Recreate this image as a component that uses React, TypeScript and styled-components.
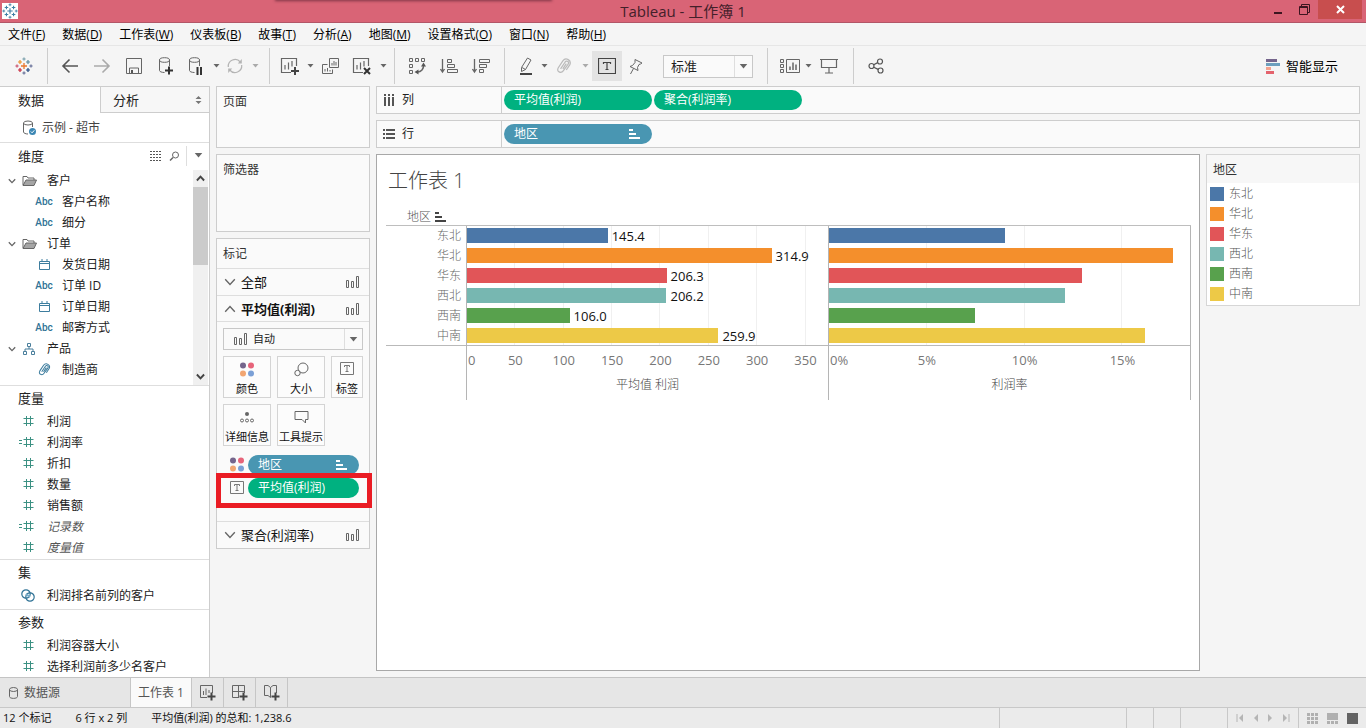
import React from "react";
import styled, { createGlobalStyle, css } from "styled-components";

const GlobalStyle = createGlobalStyle`
  * { box-sizing: border-box; }
  body {
    margin: 0;
    background: #f5f5f5;
    color: #222;
    font: 12px/16px "Open Sans", "Noto Sans CJK SC", sans-serif;
  }
  button, select { font: inherit; color: inherit; }
  button { border: 0; padding: 0; background: none; white-space: nowrap; }
  svg { display: block; flex: none; }
`;

const line = "#cdcdcd";
const softLine = "#dedede";
const green = "#00b180";
const blue = "#4996b2";

const Window = styled.div`
  display: flex;
  flex-direction: column;
  min-height: 100vh;
`;

/* ---------- title bar ---------- */
const TitleBar = styled.header`
  position: relative;
  display: grid;
  grid-template-columns: 1fr auto 1fr;
  height: 23px;
  background: #d96476;
  border-bottom: 1px solid #b25667;
`;
const TopShadow = styled.div`
  position: absolute;
  top: -3px;
  left: 275px;
  width: 277px;
  height: 3px;
  box-shadow: 0 1px 3px #7c3444;
`;
const AppBadge = styled.span`
  align-self: start;
  margin: 3px 2px;
  width: 16px;
  height: 16px;
  background: #fff;
`;
const AppTitle = styled.h1`
  margin: 0;
  font-size: 15px;
  line-height: 23px;
  font-weight: 400;
  color: #43202a;
`;
const WindowButtons = styled.div`
  display: flex;
  justify-content: flex-end;
  padding-right: 4px;
`;
const WindowButton = styled.button<{ $close?: boolean }>`
  display: grid;
  place-items: center;
  width: ${(p) => (p.$close ? 44 : 27)}px;
  height: 19px;
  background: ${(p) => (p.$close ? "#c84e4e" : "transparent")};
`;

/* ---------- menu and toolbar ---------- */
const MenuBar = styled.nav`
  display: flex;
  align-items: center;
  gap: 17px;
  height: 23px;
  padding: 2px 0 0 8px;
  border-bottom: 1px solid #e6e6e6;
  color: #000;
`;
const Toolbar = styled.div`
  display: flex;
  align-items: center;
  height: 40px;
  padding-right: 28px;
`;
const ToolGroup = styled.div<{ $pad: number; $end?: number; $open?: boolean }>`
  display: flex;
  align-items: center;
  height: 36px;
  padding-left: ${(p) => p.$pad}px;
  padding-right: ${(p) => p.$end ?? 0}px;
  ${(p) => !p.$open && css`border-right: 1px solid ${line};`}
`;
const ToolButton = styled.button<{ $w?: number; $active?: boolean }>`
  display: grid;
  place-items: center;
  width: ${(p) => p.$w ?? 32}px;
  height: 30px;
  background: ${(p) => (p.$active ? "#e3e3e3" : "transparent")};
`;
const SmartShow = styled.button`
  display: flex;
  align-items: center;
  gap: 6px;
  margin-left: auto;
  font-size: 13px;
  color: #000;
`;
const SelectBox = styled.div<{ $fit?: boolean }>`
  position: relative;
  display: flex;
  align-items: center;
  height: ${(p) => (p.$fit ? 23 : 22)}px;
  width: ${(p) => (p.$fit ? "90px" : "100%")};
  margin: ${(p) => (p.$fit ? "0 14px 0 13px" : "0")};
  border: 1px solid #c8c8c8;
  background: #fafafa;
`;
const Select = styled.select<{ $inset: number; $size: number }>`
  appearance: none;
  flex: 1;
  height: 100%;
  border: 0;
  background: none;
  padding: 0 20px 0 ${(p) => p.$inset}px;
  font-size: ${(p) => p.$size}px;
`;
const SelectArrow = styled.span`
  position: absolute;
  right: 0;
  top: 0;
  bottom: 0;
  width: 18px;
  display: grid;
  place-items: center;
  border-left: 1px solid #dedede;
  pointer-events: none;
`;
const SelectIcon = styled.span`
  position: absolute;
  left: 9px;
  top: 4px;
  pointer-events: none;
`;

/* ---------- data panel ---------- */
const Main = styled.main`
  display: flex;
  flex: 1;
`;
const DataPanel = styled.aside`
  flex: 0 0 210px;
  background: #fff;
  border-right: 1px solid ${line};
  border-top: 1px solid ${line};
`;
const PanelTabs = styled.div`
  display: flex;
  height: 26px;
`;
const PanelTab = styled.button<{ $inactive?: boolean }>`
  display: flex;
  align-items: center;
  justify-content: space-between;
  font-size: 13px;
  padding: 0 7px 0 18px;
  width: 100px;
  ${(p) =>
    p.$inactive &&
    css`
      flex: 1;
      padding-left: 12px;
      background: #f7f7f7;
      border-left: 1px solid ${line};
      border-bottom: 1px solid ${line};
    `}
`;
const DataSource = styled.div`
  display: flex;
  align-items: center;
  gap: 5px;
  height: 30px;
  padding-left: 22px;
  color: #444;
  border-bottom: 1px solid ${softLine};
`;
const Section = styled.section<{ $end?: number }>`
  padding-bottom: ${(p) => p.$end ?? 0}px;
  & + & { border-top: 1px solid ${softLine}; }
`;
const SectionHead = styled.div<{ $tall?: boolean }>`
  display: flex;
  align-items: center;
  height: ${(p) => (p.$tall ? 27 : 25)}px;
  padding: 0 0 2px 18px;
`;
const SectionTitle = styled.h2`
  flex: 1;
  margin: 0;
  font-size: 13px;
  font-weight: 400;
`;
const HeadButton = styled.button<{ $divided?: boolean }>`
  display: grid;
  place-items: center;
  width: ${(p) => (p.$divided ? 23 : 19)}px;
  height: 20px;
  ${(p) => p.$divided && css`border-left: 1px solid ${softLine}; margin-left: 2px;`}
`;
const TreeArea = styled.div`
  display: flex;
  height: 215px;
`;
const Fields = styled.ul`
  flex: 1;
  margin: 0;
  padding: 0;
  list-style: none;
`;
const Field = styled.li<{ $kind: "folder" | "child" | "flat"; $italic?: boolean }>`
  display: flex;
  align-items: center;
  height: 21px;
  padding-left: ${(p) => ({ folder: 4, child: 33, flat: 18 }[p.$kind])}px;
  ${(p) => p.$italic && css`font-style: italic; color: #555;`}
`;
const FieldIcon = styled.span<{ $w: number }>`
  display: grid;
  place-items: center;
  width: ${(p) => p.$w}px;
`;
const FieldName = styled.span<{ $gap: number }>`
  padding-left: ${(p) => p.$gap}px;
`;
const AbcTag = styled.span`
  font: 500 10px/16px Roboto, sans-serif;
  color: #2f7295;
`;
const ScrollTrack = styled.div`
  display: flex;
  flex-direction: column;
  width: 15px;
  margin-right: 1px;
  background: #f0f0f0;
`;
const ScrollEnd = styled.button`
  display: grid;
  place-items: center;
  height: 17px;
`;
const ScrollThumb = styled.div`
  height: 78px;
  margin-bottom: auto;
  background: #cbcbcb;
`;

/* ---------- workspace ---------- */
const Workspace = styled.div`
  display: flex;
  flex: 1;
  gap: 6px;
  padding: 0 6px 6px;
  min-width: 0;
`;
const CardColumn = styled.div`
  display: flex;
  flex-direction: column;
  gap: 6px;
  width: 154px;
`;
const Card = styled.section<{ $h?: number }>`
  min-height: ${(p) => p.$h ?? 0}px;
  background: #fafafa;
  border: 1px solid ${line};
`;
const CardTitle = styled.h2`
  margin: 0;
  padding: 7px 6px 5px;
  font-size: 12px;
  font-weight: 400;
  color: #333;
`;
const MarksTitle = styled(CardTitle)`
  height: 30px;
  border-bottom: 1px solid ${softLine};
`;
const MarkLayer = styled.button<{ $bold?: boolean; $last?: boolean }>`
  display: flex;
  align-items: center;
  gap: 5px;
  width: 100%;
  height: ${(p) => (p.$bold ? 26 : 27)}px;
  padding: 0 10px 0 7px;
  font-size: 13px;
  font-weight: ${(p) => (p.$bold ? 700 : 400)};
  color: #111;
  ${(p) => (p.$last ? css`border-top: 1px solid ${softLine};` : css`border-bottom: 1px solid ${softLine};`)}
  & > svg:last-child { margin-left: auto; }
`;
const MarksBody = styled.div`
  padding: 6px 6px 7px;
`;
const MarkButtons = styled.div`
  display: grid;
  grid-template-columns: 48px 48px 32px;
  gap: 6px;
  margin-top: 6px;
`;
const MarkButton = styled.button`
  display: flex;
  flex-direction: column;
  align-items: center;
  justify-content: space-between;
  height: 42px;
  padding: 5px 0 0;
  border: 1px solid #d4d4d4;
  background: #fcfcfc;
  font-size: 11px;
  color: #111;
`;
const MarkPillRow = styled.div`
  position: relative;
  display: flex;
  align-items: center;
  gap: 3px;
  height: 23px;
  padding: 0 10px 0 12px;
`;
const MarkPillList = styled.div`
  padding-bottom: 22px;
`;
const HighlightBox = styled.div`
  position: absolute;
  inset: -3px -3px -9px -1px;
  border: 5px solid #ea1c24;
`;
const PillBox = styled.button<{ $tone: string; $fluid?: boolean }>`
  display: flex;
  align-items: center;
  justify-content: space-between;
  width: 148px;
  height: 20px;
  padding: 0 12px 0 10px;
  border-radius: 10px;
  background: ${(p) => p.$tone};
  color: #fff;
  ${(p) => p.$fluid && css`flex: 1; width: auto;`}
`;

const SheetArea = styled.div`
  display: flex;
  flex: 1;
  flex-direction: column;
  gap: 6px;
  min-width: 0;
`;
const Shelf = styled.div`
  display: flex;
  align-items: center;
  gap: 2px;
  height: 28px;
  border: 1px solid ${line};
  background: #fafafa;
`;
const ShelfLabel = styled.div`
  display: flex;
  align-items: center;
  gap: 7px;
  width: 125px;
  height: 100%;
  padding-left: 6px;
  border-right: 1px solid ${line};
`;
const SheetRow = styled.div`
  display: flex;
  flex: 1;
  gap: 6px;
  align-items: flex-start;
`;
const View = styled.section`
  flex: 1;
  align-self: stretch;
  padding: 0 8px 0 9px;
  background: #fff;
  border: 1px solid #a8a8a8;
`;
const SheetTitle = styled.h2`
  margin: 0;
  padding: 1px 0 0 2px;
  font-size: 20px;
  line-height: 50px;
  font-weight: 300;
  color: #444;
`;
const RowHeader = styled.div`
  display: flex;
  align-items: center;
  gap: 4px;
  height: 19px;
  padding: 2px 0 0 21px;
  font-weight: 300;
  color: #555;
`;
const Chart = styled.div`
  display: grid;
  grid-template-columns: 80px 362fr 363fr;
  align-items: start;
  border-top: 1px solid #bebebe;
`;
const CategoryColumn = styled.div`
  border-bottom: 1px solid #b9b9b9;
  & > :last-child { height: 19px; }
`;
const Category = styled.div`
  height: 20px;
  padding-right: 5px;
  line-height: 20px;
  text-align: right;
  font-weight: 300;
  color: #666;
`;
const Pane = styled.div`
  min-width: 0;
  border-left: 1px solid #b5b5b5;
  &:last-child { border-right: 1px solid #b5b5b5; }
`;
const Bars = styled.div<{ $step: number }>`
  border-bottom: 1px solid #b9b9b9;
  background: repeating-linear-gradient(
    to right,
    transparent 0,
    transparent calc(${(p) => p.$step}% - 1px),
    #f0f0f0 calc(${(p) => p.$step}% - 1px),
    #f0f0f0 ${(p) => p.$step}%
  );
  & > :last-child { height: 19px; padding-bottom: 0; }
`;
const BarRow = styled.div`
  display: flex;
  align-items: center;
  gap: 4px;
  height: 20px;
  padding-bottom: 1px;
  font-size: 13px;
  color: #111;
`;
const Bar = styled.div`
  height: 15px;
`;
const Ticks = styled.div`
  display: flex;
  margin-top: 6px;
  font-size: 13px;
  color: #777;
  overflow: hidden;
`;
const Tick = styled.span<{ $w: number; $first?: boolean }>`
  flex: none;
  width: ${(p) => p.$w}%;
  text-align: ${(p) => (p.$first ? "left" : "center")};
  padding-left: ${(p) => (p.$first ? 1 : 0)}px;
`;
const AxisTitle = styled.div`
  padding: 9px 0 7px;
  text-align: center;
  font-weight: 300;
  color: #444;
`;
const Legend = styled.section`
  width: 154px;
  background: #fff;
  border: 1px solid #d6d6d6;
`;
const LegendTitle = styled(CardTitle)`
  background: #f7f7f7;
`;
const LegendItem = styled.div`
  display: flex;
  align-items: center;
  gap: 5px;
  height: 20px;
  padding-left: 3px;
  font-weight: 300;
  color: #555;
`;
const Swatch = styled.span<{ $tone: string }>`
  width: 14px;
  height: 14px;
  background: ${(p) => p.$tone};
`;
const LegendList = styled.div`
  padding: 1px 0;
`;

/* ---------- bottom strips ---------- */
const TabStrip = styled.nav`
  display: flex;
  height: 31px;
  background: #e6e6e6;
  border-top: 1px solid #c4c4c4;
  border-bottom: 1px solid #c8c8c8;
`;
const SheetTab = styled.button<{ $w: number; $active?: boolean }>`
  display: flex;
  align-items: center;
  justify-content: ${(p) => (p.$w > 100 ? "flex-start" : "center")};
  gap: 6px;
  width: ${(p) => p.$w}px;
  padding: ${(p) => (p.$w > 100 ? "0 9px" : "0")};
  color: #555;
  background: ${(p) => (p.$active ? "#fafafa" : "transparent")};
  border-right: 1px solid #c6c6c6;
`;
const StatusBar = styled.footer`
  display: flex;
  align-items: center;
  gap: 24px;
  height: 20px;
  padding-left: 3px;
  background: #ebebeb;
  font-size: 11px;
  color: #111;
`;
const StatusCells = styled.div`
  display: flex;
  height: 100%;
  margin-left: auto;
`;
const StatusCell = styled.div<{ $w: number }>`
  display: flex;
  align-items: center;
  justify-content: space-around;
  width: ${(p) => p.$w}px;
  padding: 0 3px;
  border-left: 1px solid #c8c8c8;
`;

/* ---------- icons ---------- */
type IconProps = { w: number; h?: number; c?: string; sw?: number; children: React.ReactNode };
const Icon = ({ w, h = w, c = "#666", sw = 1, children }: IconProps) => (
  <svg width={w} height={h} viewBox={`0 0 ${w} ${h}`} fill="none" stroke={c} strokeWidth={sw} aria-hidden="true">
    {children}
  </svg>
);

const plus = (x: number, y: number, r: number) => `M${x - r} ${y}h${2 * r}M${x} ${y - r}v${2 * r}`;

const Logo = ({ mono }: { mono?: boolean }) => {
  const k = (c: string) => (mono ? "#3f7fa5" : c);
  return (
    <Icon w={18} h={18}>
      <path d={plus(9, 9, 3)} stroke={k("#e8762c")} strokeWidth="1.3" />
      <path d={plus(5, 5, 2)} stroke={k("#eb9129")} strokeWidth="1.2" />
      <path d={plus(13, 5, 2)} stroke={k("#59879b")} strokeWidth="1.2" />
      <path d={plus(5, 13, 2)} stroke={k("#c72035")} strokeWidth="1.2" />
      <path d={plus(13, 13, 2)} stroke={k("#1f447e")} strokeWidth="1.2" />
      <path d={plus(9, 2, 1.6)} stroke={k("#7199a6")} />
      <path d={plus(9, 16, 1.6)} stroke={k("#5b6591")} />
      <path d={plus(2, 9, 1.6)} stroke={k("#c84664")} />
      <path d={plus(16, 9, 1.6)} stroke={k("#5b6591")} />
    </Icon>
  );
};
const Caret = ({ faint, wide }: { faint?: boolean; wide?: boolean }) => (
  <svg width={wide ? 9 : 7} height={wide ? 5 : 4} viewBox="0 0 7 4" aria-hidden="true">
    <path d="M.5 0h6L3.500 3.600z" fill={faint ? "#aaa" : "#666"} />
  </svg>
);
const Arrow = ({ back }: { back?: boolean }) => (
  <Icon w={18} h={16} c={back ? "#555" : "#aaa"} sw={1.6}>
    <path d={back ? "M17 8H2M8.500 1.500L2 8l6.500 6.500" : "M1 8h15M9.500 1.500L16 8l-6.500 6.500"} />
  </Icon>
);
const SaveIcon = () => (
  <Icon w={16}><path d="M.5.500h15v15H.5zM3.500 15v-5h9v5" /><path d="M5 12h2v3H5z" fill="#555" stroke="none" /></Icon>
);
const DbIcon = ({ pause }: { pause?: boolean }) => (
  <Icon w={18} h={20}>
    <ellipse cx="7.500" cy="4" rx="5" ry="2.300" />
    <path d="M2.500 4v10.500c0 1 2 2 5 2M12.500 4v6" />
    {pause ? <path d="M10.500 11v8M14 11v8" stroke="#333" strokeWidth="2" /> : <path d={plus(12, 14.500, 4)} stroke="#333" strokeWidth="2" />}
  </Icon>
);
const RefreshIcon = () => (
  <Icon w={18} c="#b4b4b4" sw={1.2}>
    <path d="M2.300 10a6.800 6.800 0 0 1 12-5M15.700 8a6.800 6.800 0 0 1-12 5" />
    <path d="M15.800 2v4.500h-4zM2.200 16v-4.500h4z" fill="#b4b4b4" stroke="none" />
  </Icon>
);
const SheetIcon = ({ clear, small }: { clear?: boolean; small?: boolean }) => (
  <Icon w={small ? 17 : 20} h={small ? 17 : 20}>
    <path d={small ? "M8 13.500H1.500v-12h12V9M4.500 11V7M7 11V4.500M10 9V6" : "M11 16.500H1.500v-14h15V10M5 13.500V9M8.500 13.500V6.500M12 10.500V5"} strokeWidth={small ? 1 : 1.2} />
    {clear ? <path d="M12 12l6 6M18 12l-6 6" stroke="#333" strokeWidth="2" /> : <path d={plus(small ? 12.500 : 15, small ? 12.500 : 15, 4)} stroke="#444" strokeWidth="2" />}
  </Icon>
);
const DuplicateIcon = () => (
  <Icon w={18} h={18}>
    <path d="M7.500 1.500h9v9h-9zM5.500 7.500H.5v9h10v-4M10 8.500V6M12 8.500V4M14 8.500V5M3 14.500V12M5.500 14.500V11M8 14.500V13" />
  </Icon>
);
const SwapIcon = () => (
  <Icon w={18} h={18}>
    <path d="M1.500 1.500h3v3h-3zM7.500 1.500h3v3h-3zM13.500 1.500h3v3h-3zM1.500 7.500h3v3h-3zM1.500 13.500h3v3h-3z" />
    <path d="M15.500 8c.5 4-2.500 7-6 7" strokeWidth="1.500" />
    <path d="M15.500 5.500l2.500 4h-5zM6.500 15l4-2.500v5z" fill="#555" stroke="none" />
  </Icon>
);
const SortIcon = ({ desc }: { desc?: boolean }) => (
  <Icon w={18} h={16}>
    <path d="M2.500 1v13M.5 11l2 3 2-3" strokeWidth="1.300" />
    <path d={desc ? "M7.500 1.500h10v3h-10zM7.500 6.500h7v3h-7zM7.500 11.500h4v3h-4z" : "M7.500 1.500h4v3h-4zM7.500 6.500h7v3h-7zM7.500 11.500h10v3h-10z"} />
  </Icon>
);
const PenIcon = () => (
  <Icon w={14} h={18}>
    <path d="M8.500 1l3.500 2-5.500 9.500-4 2V10.500zM3 10.500l3.500 2" />
    <path d="M1 17h12" stroke="#444" strokeWidth="2" />
  </Icon>
);
const ClipIcon = ({ w = 14, c = "#bbb" }: { w?: number; c?: string }) => (
  <svg width={w} height={w} viewBox="0 0 14 14" fill="none" stroke={c} strokeWidth="1.100" aria-hidden="true">
    <path d="M4 9.500L8 3.500c1.500-2 4 0 2.500 2L6.500 11c-2 3-6.500 1-4.500-2.500l4-6c2.500-3.500 8-.500 6 3.500L9 10.500M6 9.500l3-4.500" />
  </svg>
);
const TextIcon = ({ big }: { big?: boolean }) => (
  <Icon w={big ? 18 : 14} h={big ? 16 : 13} c={big ? "#444" : "#777"}>
    {big ? (
      <path d="M.5.500h17v15H.5zM5.500 6V4.500h7V6M9 4.500v7M7.500 11.500h3" strokeWidth="1.200" />
    ) : (
      <path d="M.5.500h13v12H.5zM4.500 5V3.500h5V5M7 3.500v6M5.500 9.500h3" />
    )}
  </Icon>
);
const PinIcon = () => (
  <Icon w={14} h={17}>
    <path d="M6 1.500l7 3.500-1.500 1-1.500.500-1.500 3 .5 3-8-4 2.500-1 2.500-3zM4.500 10.500L1.500 16" />
  </Icon>
);
const CardsIcon = () => (
  <Icon w={20} h={16}>
    <path d="M.5 1.500h3v3h-3zM.5 6.500h3v3h-3zM.5 11.500h3v3h-3zM6.500 1.500h13v13h-13z" />
    <path d="M10 12V8.500M13 12V4.500M16 12V6.500" strokeWidth="1.500" />
  </Icon>
);
const ScreenIcon = () => (
  <Icon w={18} h={16} sw={1.200}><path d="M0 1.500h18M1.500 1.500v8h15v-8M9 9.500v5M5 15h8" /></Icon>
);
const ShareIcon = () => (
  <Icon w={16} sw={1.200} c="#555">
    <circle cx="3.500" cy="8" r="2.500" /><circle cx="12" cy="3.500" r="2.500" /><circle cx="12.500" cy="12.500" r="2.500" />
    <path d="M5.700 6.800l4-2.200M5.700 9.200l4.500 2.200" />
  </Icon>
);
const SmartIcon = () => (
  <Icon w={14} h={15} sw={3}>
    <path d="M0 1.500h11" stroke="#75658c" /><path d="M0 5.500h14" stroke="#6d9fbd" />
    <path d="M0 9.500h5" stroke="#f3a28e" /><path d="M0 13.500h8" stroke="#e4636d" />
  </Icon>
);
const Chevron = ({ up, dark, size = 8 }: { up?: boolean; dark?: boolean; size?: number }) => (
  <svg width={size} height={size} viewBox="0 0 8 8" fill="none" stroke={dark ? "#444" : "#666"} strokeWidth={dark ? 1.700 : size > 8 ? 0.9 : 1.3} aria-hidden="true">
    <path d={up ? "M.8 5.800L4 2.400l3.200 3.400" : "M.8 2.200L4 5.600l3.200-3.400"} />
  </svg>
);
const MiniBars = () => (
  <Icon w={14} h={12}><path d="M1.500 4.500h2v7h-2zM6.500 5.500h2v6h-2zM11.500.500h2v11h-2z" /></Icon>
);
const PillSort = ({ c = "#fff" }: { c?: string }) => (
  <Icon w={11} h={10} c={c} sw={2}><path d="M0 1h4M0 5h7M0 9h11" /></Icon>
);
const Dots = () => (
  <Icon w={16} h={15}>
    {[["#75658c", 4, 3.5], ["#e7647a", 12, 3.5], ["#f2a672", 4, 11.5], ["#7ba0d6", 12, 11.5]].map(([c, x, y]) => (
      <circle key={c} cx={x} cy={y} r="3" fill={c as string} stroke="none" />
    ))}
  </Icon>
);
const SizeIcon = () => (
  <Icon w={15} h={15}><circle cx="9" cy="6" r="5" /><circle cx="3.500" cy="11" r="2.700" fill="#fcfcfc" /></Icon>
);
const DetailIcon = () => (
  <Icon w={16} h={14}>
    <circle cx="8" cy="4" r="2" fill="#666" stroke="none" />
    <circle cx="3" cy="10.500" r="1.500" /><circle cx="8" cy="10.500" r="1.500" /><circle cx="13" cy="10.500" r="1.500" />
  </Icon>
);
const TooltipIcon = () => (
  <Icon w={15} h={14}><path d="M1 1.500h13v8h-2.500v3.500L8 9.500H1z" /></Icon>
);
const FolderIcon = () => (
  <Icon w={15} h={11}>
    <path d="M1 10V1.500h4l1 1.500h6V5" /><path d="M1 10.500L4 5h10.500L12 10.500z" fill="#a5a5a5" />
  </Icon>
);
const HierarchyIcon = () => (
  <Icon w={12} h={12} c="#4a7f9c"><path d="M4.500.500h3v3h-3zM.5 8.500h3v3h-3zM8.500 8.500h3v3h-3zM6 3.500V6M2 8.500V6h8v2.500" /></Icon>
);
const DateIcon = () => (
  <Icon w={11} h={11} c="#3d7d9e"><path d="M.5 2.500h10v8H.5zM.5 4.500h10M3 0v2.500M8 0v2.500" /></Icon>
);
const HashIcon = ({ calc }: { calc?: boolean }) => (
  <Icon w={20} h={13} c="#3c9183"><path d={`M8.500 1v10M12.500 1v10M5.500 3.500h10M5.500 8.500h10${calc ? "M1 4.500h3M1 7.500h3" : ""}`} /></Icon>
);
const SetIcon = () => (
  <Icon w={14} h={13} c="#2f7295" sw={1.200}>
    <circle cx="5" cy="5" r="4.200" /><circle cx="9" cy="8" r="4.200" /><path d="M5 5l4 3" stroke="#7db0cc" strokeWidth="2" />
  </Icon>
);
const SourceIcon = () => (
  <Icon w={15} h={16}>
    <ellipse cx="6" cy="3" rx="4.500" ry="2" /><path d="M1.500 3v9c0 1 2 2 4.500 2M10.500 3v4" />
    <circle cx="10.500" cy="11.500" r="3.500" fill="#3c87b4" stroke="none" /><path d="M8.800 11.500l1.300 1.300 2.200-2.500" stroke="#fff" />
  </Icon>
);

/* ---------- data ---------- */
const menus: [string, string][] = [
  ["文件", "F"], ["数据", "D"], ["工作表", "W"], ["仪表板", "B"], ["故事", "T"],
  ["分析", "A"], ["地图", "M"], ["设置格式", "O"], ["窗口", "N"], ["帮助", "H"],
];
const dimensions: { type: string; name: string }[] = [
  { type: "folder", name: "客户" }, { type: "abc", name: "客户名称" }, { type: "abc", name: "细分" },
  { type: "folder", name: "订单" }, { type: "date", name: "发货日期" }, { type: "abc", name: "订单 ID" },
  { type: "date", name: "订单日期" }, { type: "abc", name: "邮寄方式" }, { type: "tree", name: "产品" },
  { type: "clip", name: "制造商" },
];
const measures = [
  { name: "利润" }, { name: "利润率", calc: true }, { name: "折扣" }, { name: "数量" }, { name: "销售额" },
  { name: "记录数", calc: true, italic: true }, { name: "度量值", italic: true },
];
const regions = [
  { name: "东北", tone: "#4b77a8", profit: 145.4, rate: 9.02 },
  { name: "华北", tone: "#f48f2c", profit: 314.9, rate: 17.6 },
  { name: "华东", tone: "#e15558", profit: 206.3, rate: 12.95 },
  { name: "西北", tone: "#77b7b1", profit: 206.2, rate: 12.08 },
  { name: "西南", tone: "#58a14d", profit: 106.0, rate: 7.48 },
  { name: "中南", tone: "#edc947", profit: 259.9, rate: 16.16 },
];
const profitMax = 373.2;
const rateMax = 18.45;

const ChartPane = ({ title, ticks, step, values, max, labels }: {
  title: string; ticks: string[]; step: number; values: number[]; max: number; labels?: boolean;
}) => {
  const pct = (step / max) * 100;
  return (
    <Pane>
      <Bars $step={pct}>
        {values.map((v, i) => (
          <BarRow key={regions[i].name}>
            <Bar style={{ width: `${(v / max) * 100}%`, background: regions[i].tone }} />
            {labels && v.toFixed(1)}
          </BarRow>
        ))}
      </Bars>
      <Ticks>
        {ticks.map((t, i) => <Tick key={t} $w={i ? pct : pct / 2} $first={!i}>{t}</Tick>)}
      </Ticks>
      <AxisTitle>{title}</AxisTitle>
    </Pane>
  );
};

const DimensionRow = ({ type, name }: { type: string; name: string }) => {
  if (type === "folder" || type === "tree")
    return (
      <Field $kind="folder">
        <FieldIcon $w={15}><Chevron /></FieldIcon>
        <FieldIcon $w={20}>{type === "tree" ? <HierarchyIcon /> : <FolderIcon />}</FieldIcon>
        <FieldName $gap={8}>{name}</FieldName>
      </Field>
    );
  return (
    <Field $kind="child">
      <FieldIcon $w={22}>
        {type === "abc" ? <AbcTag>Abc</AbcTag> : type === "date" ? <DateIcon /> : <ClipIcon w={13} c="#3d7d9e" />}
      </FieldIcon>
      <FieldName $gap={7}>{name}</FieldName>
    </Field>
  );
};

const HashRow = ({ name, calc, italic }: { name: string; calc?: boolean; italic?: boolean }) => (
  <Field $kind="flat" $italic={italic}><HashIcon calc={calc} /><FieldName $gap={9}>{name}</FieldName></Field>
);

export default function App() {
  return (
    <Window>
      <GlobalStyle />
      <TitleBar>
        <AppBadge><svg width="16" height="16" viewBox="0 0 18 18"><Logo mono /></svg></AppBadge>
        <AppTitle>Tableau - 工作簿 1</AppTitle>
        <WindowButtons>
          <WindowButton aria-label="最小化"><Icon w={9} h={10} c="#3d1520" sw={2}><path d="M1 8h8" /></Icon></WindowButton>
          <WindowButton aria-label="还原"><Icon w={11} h={11} c="#3d1520"><path d="M.5 2.500h8v8h-8zM.5 3.500h8M2.500 2.500V.500h8v8h-2" /></Icon></WindowButton>
          <WindowButton $close aria-label="关闭"><Icon w={9} h={9} c="#fff" sw={2}><path d="M1 1l7 7M8 1L1 8" /></Icon></WindowButton>
        </WindowButtons>
        <TopShadow />
      </TitleBar>

      <MenuBar>
        {menus.map(([name, key]) => <button key={key}>{name}(<u>{key}</u>)</button>)}
      </MenuBar>

      <Toolbar>
        <ToolGroup $pad={8} $end={7}><ToolButton aria-label="开始"><Logo /></ToolButton></ToolGroup>
        <ToolGroup $pad={6} $end={7}>
          <ToolButton aria-label="撤消"><Arrow back /></ToolButton>
          <ToolButton aria-label="重做"><Arrow /></ToolButton>
          <ToolButton aria-label="保存"><SaveIcon /></ToolButton>
          <ToolButton aria-label="新建数据源"><DbIcon /></ToolButton>
          <ToolButton $w={28} aria-label="暂停更新"><DbIcon pause /></ToolButton>
          <ToolButton $w={12} aria-label="更新选项"><Caret /></ToolButton>
          <ToolButton $w={26} aria-label="运行更新"><RefreshIcon /></ToolButton>
          <ToolButton $w={14} aria-label="运行选项"><Caret faint /></ToolButton>
        </ToolGroup>
        <ToolGroup $pad={6} $end={6}>
          <ToolButton $w={28} aria-label="新建工作表"><SheetIcon /></ToolButton>
          <ToolButton $w={12} aria-label="新建选项"><Caret /></ToolButton>
          <ToolButton $w={30} aria-label="复制"><DuplicateIcon /></ToolButton>
          <ToolButton $w={32} aria-label="清除工作表"><SheetIcon clear /></ToolButton>
          <ToolButton $w={10} aria-label="清除选项"><Caret /></ToolButton>
        </ToolGroup>
        <ToolGroup $pad={6} $end={7}>
          <ToolButton aria-label="交换行和列"><SwapIcon /></ToolButton>
          <ToolButton aria-label="升序"><SortIcon /></ToolButton>
          <ToolButton aria-label="降序"><SortIcon desc /></ToolButton>
        </ToolGroup>
        <ToolGroup $pad={9}>
          <ToolButton $w={24} aria-label="突出显示"><PenIcon /></ToolButton>
          <ToolButton $w={12} aria-label="突出显示选项"><Caret /></ToolButton>
          <ToolButton $w={28} aria-label="分组"><ClipIcon w={16} /></ToolButton>
          <ToolButton $w={14} aria-label="分组选项"><Caret faint /></ToolButton>
          <ToolButton $w={30} $active aria-label="显示标记标签"><TextIcon big /></ToolButton>
          <ToolButton $w={28} aria-label="固定轴"><PinIcon /></ToolButton>
          <SelectBox $fit>
            <Select $inset={7} $size={13} aria-label="适合" defaultValue="标准"><option>标准</option></Select>
            <SelectArrow><Caret wide /></SelectArrow>
          </SelectBox>
        </ToolGroup>
        <ToolGroup $pad={9} $end={8}>
          <ToolButton $w={26} aria-label="显示卡"><CardsIcon /></ToolButton>
          <ToolButton $w={10} aria-label="显示卡选项"><Caret /></ToolButton>
          <ToolButton aria-label="演示模式"><ScreenIcon /></ToolButton>
        </ToolGroup>
        <ToolGroup $pad={6} $open><ToolButton aria-label="共享"><ShareIcon /></ToolButton></ToolGroup>
        <SmartShow><SmartIcon />智能显示</SmartShow>
      </Toolbar>

      <Main>
        <DataPanel>
          <PanelTabs>
            <PanelTab>数据</PanelTab>
            <PanelTab $inactive>分析<Icon w={7} h={8}><path d="M3.500 0L6.500 3h-6zM3.500 8L.5 5h6z" fill="#777" stroke="none" /></Icon></PanelTab>
          </PanelTabs>
          <DataSource><SourceIcon />示例 - 超市</DataSource>
          <Section>
            <SectionHead $tall>
              <SectionTitle>维度</SectionTitle>
              <HeadButton aria-label="查看数据"><Icon w={12} h={10} c="#555"><path d="M0 .5h12M0 3.500h12M0 6.500h12M0 9.500h12" strokeDasharray="2 1" /></Icon></HeadButton>
              <HeadButton aria-label="查找字段"><Icon w={11} h={10}><circle cx="6.500" cy="4" r="3" /><path d="M4 6.500L1 9.500" strokeWidth="1.500" /></Icon></HeadButton>
              <HeadButton $divided aria-label="菜单"><Caret wide /></HeadButton>
            </SectionHead>
            <TreeArea>
              <Fields>{dimensions.map((d) => <DimensionRow key={d.name} {...d} />)}</Fields>
              <ScrollTrack>
                <ScrollEnd aria-label="向上滚动"><Chevron up dark size={9} /></ScrollEnd>
                <ScrollThumb />
                <ScrollEnd aria-label="向下滚动"><Chevron dark size={9} /></ScrollEnd>
              </ScrollTrack>
            </TreeArea>
          </Section>
          <Section $end={1}>
            <SectionHead><SectionTitle>度量</SectionTitle></SectionHead>
            <Fields>{measures.map((m) => <HashRow key={m.name} {...m} />)}</Fields>
          </Section>
          <Section $end={3}>
            <SectionHead><SectionTitle>集</SectionTitle></SectionHead>
            <Fields><Field $kind="flat"><FieldIcon $w={20}><SetIcon /></FieldIcon><FieldName $gap={9}>利润排名前列的客户</FieldName></Field></Fields>
          </Section>
          <Section>
            <SectionHead><SectionTitle>参数</SectionTitle></SectionHead>
            <Fields><HashRow name="利润容器大小" /><HashRow name="选择利润前多少名客户" /></Fields>
          </Section>
        </DataPanel>

        <Workspace>
          <CardColumn>
            <Card $h={62}><CardTitle>页面</CardTitle></Card>
            <Card $h={78}><CardTitle>筛选器</CardTitle></Card>
            <Card>
              <MarksTitle>标记</MarksTitle>
              <MarkLayer><Chevron size={12} />全部<MiniBars /></MarkLayer>
              <MarkLayer $bold><Chevron up size={12} />平均值(利润)<MiniBars /></MarkLayer>
              <MarksBody>
                <SelectBox>
                  <SelectIcon><MiniBars /></SelectIcon>
                  <Select $inset={29} $size={11} aria-label="标记类型" defaultValue="自动"><option>自动</option></Select>
                  <SelectArrow><Caret wide /></SelectArrow>
                </SelectBox>
                <MarkButtons>
                  <MarkButton><Dots />颜色</MarkButton>
                  <MarkButton><SizeIcon />大小</MarkButton>
                  <MarkButton><TextIcon />标签</MarkButton>
                  <MarkButton><DetailIcon />详细信息</MarkButton>
                  <MarkButton><TooltipIcon />工具提示</MarkButton>
                </MarkButtons>
              </MarksBody>
              <MarkPillList>
                <MarkPillRow>
                  <FieldIcon $w={16}><Dots /></FieldIcon>
                  <PillBox $tone={blue} $fluid>地区<PillSort /></PillBox>
                </MarkPillRow>
                <MarkPillRow>
                  <FieldIcon $w={16}><TextIcon /></FieldIcon>
                  <PillBox $tone={green} $fluid>平均值(利润)</PillBox>
                  <HighlightBox />
                </MarkPillRow>
              </MarkPillList>
              <MarkLayer $last><Chevron size={12} />聚合(利润率)<MiniBars /></MarkLayer>
            </Card>
          </CardColumn>

          <SheetArea>
            <Shelf>
              <ShelfLabel>
                <Icon w={12} h={12} c="#555" sw={2}><path d="M2 0v2M2 3v9M6 0v2M6 3v9M10 0v2M10 3v9" /></Icon>列
              </ShelfLabel>
              <PillBox $tone={green}>平均值(利润)</PillBox>
              <PillBox $tone={green}>聚合(利润率)</PillBox>
            </Shelf>
            <Shelf>
              <ShelfLabel>
                <Icon w={12} h={10} c="#555" sw={2}><path d="M0 1h2M3 1h9M0 5h2M3 5h9M0 9h2M3 9h9" /></Icon>行
              </ShelfLabel>
              <PillBox $tone={blue}>地区<PillSort /></PillBox>
            </Shelf>
            <SheetRow>
              <View>
                <SheetTitle>工作表 1</SheetTitle>
                <RowHeader>地区<PillSort c="#444" /></RowHeader>
                <Chart>
                  <CategoryColumn>{regions.map((r) => <Category key={r.name}>{r.name}</Category>)}</CategoryColumn>
                  <ChartPane title="平均值 利润" step={50} max={profitMax} labels values={regions.map((r) => r.profit)}
                    ticks={["0", "50", "100", "150", "200", "250", "300", "350"]} />
                  <ChartPane title="利润率" step={5} max={rateMax} values={regions.map((r) => r.rate)}
                    ticks={["0%", "5%", "10%", "15%"]} />
                </Chart>
              </View>
              <Legend>
                <LegendTitle>地区</LegendTitle>
                <LegendList>
                  {regions.map((r) => <LegendItem key={r.name}><Swatch $tone={r.tone} />{r.name}</LegendItem>)}
                </LegendList>
              </Legend>
            </SheetRow>
          </SheetArea>
        </Workspace>
      </Main>

      <TabStrip>
        <SheetTab $w={131}><Icon w={9} h={12}><ellipse cx="4.500" cy="2.500" rx="4" ry="2" /><path d="M.5 2.500v7c0 2.500 8 2.500 8 0v-7" /></Icon>数据源</SheetTab>
        <SheetTab $w={61} $active>工作表 1</SheetTab>
        <SheetTab $w={32} aria-label="新建工作表"><SheetIcon small /></SheetTab>
        <SheetTab $w={32} aria-label="新建仪表板">
          <Icon w={17}><path d="M8 13.500H1.500v-12h12V9M1.500 7.500h12M7.500 1.500v12" /><path d={plus(12.5, 12.5, 4)} stroke="#444" strokeWidth="2" /></Icon>
        </SheetTab>
        <SheetTab $w={32} aria-label="新建故事">
          <Icon w={17}><path d="M7.500 13.500l-2.500-2H1.500v-10H5l2.500 2 2.500-2h3.500V9M7.500 3.500v10" /><path d={plus(12.5, 12.5, 4)} stroke="#444" strokeWidth="2" /></Icon>
        </SheetTab>
      </TabStrip>
      <StatusBar>
        <span>12 个标记</span>
        <span>6 行 x 2 列</span>
        <span>平均值(利润) 的总和: 1,238.6</span>
        <StatusCells>
          <StatusCell $w={127} /><StatusCell $w={27} /><StatusCell $w={27} /><StatusCell $w={47} />
          <StatusCell $w={71}>
            <Icon w={8} h={8} c="#b5b5b5"><path d="M1 0v8" /><path d="M7 0v8L3 4z" fill="#b5b5b5" stroke="none" /></Icon>
            <Icon w={5} h={8}><path d="M5 0v8L1 4z" fill="#b5b5b5" stroke="none" /></Icon>
            <Icon w={5} h={8}><path d="M0 0v8l4-4z" fill="#b5b5b5" stroke="none" /></Icon>
            <Icon w={8} h={8} c="#b5b5b5"><path d="M7 0v8" /><path d="M1 0v8l4-4z" fill="#b5b5b5" stroke="none" /></Icon>
          </StatusCell>
          <StatusCell $w={68}>
            <Icon w={11} h={11} c="#b0b0b0" sw={3}><path d="M0 1.500h11M0 5.500h11M0 9.500h11" strokeDasharray="3 1" /></Icon>
            <Icon w={11} h={11} c="#b0b0b0"><path d="M0 0h11v7H0z" fill="#b0b0b0" stroke="none" /><path d="M0 9.500h11" strokeWidth="3" strokeDasharray="3 1" /></Icon>
            <Icon w={11} h={11}><path d="M0 0h11v11H0z" fill="#636363" stroke="none" /></Icon>
          </StatusCell>
        </StatusCells>
      </StatusBar>
    </Window>
  );
}
